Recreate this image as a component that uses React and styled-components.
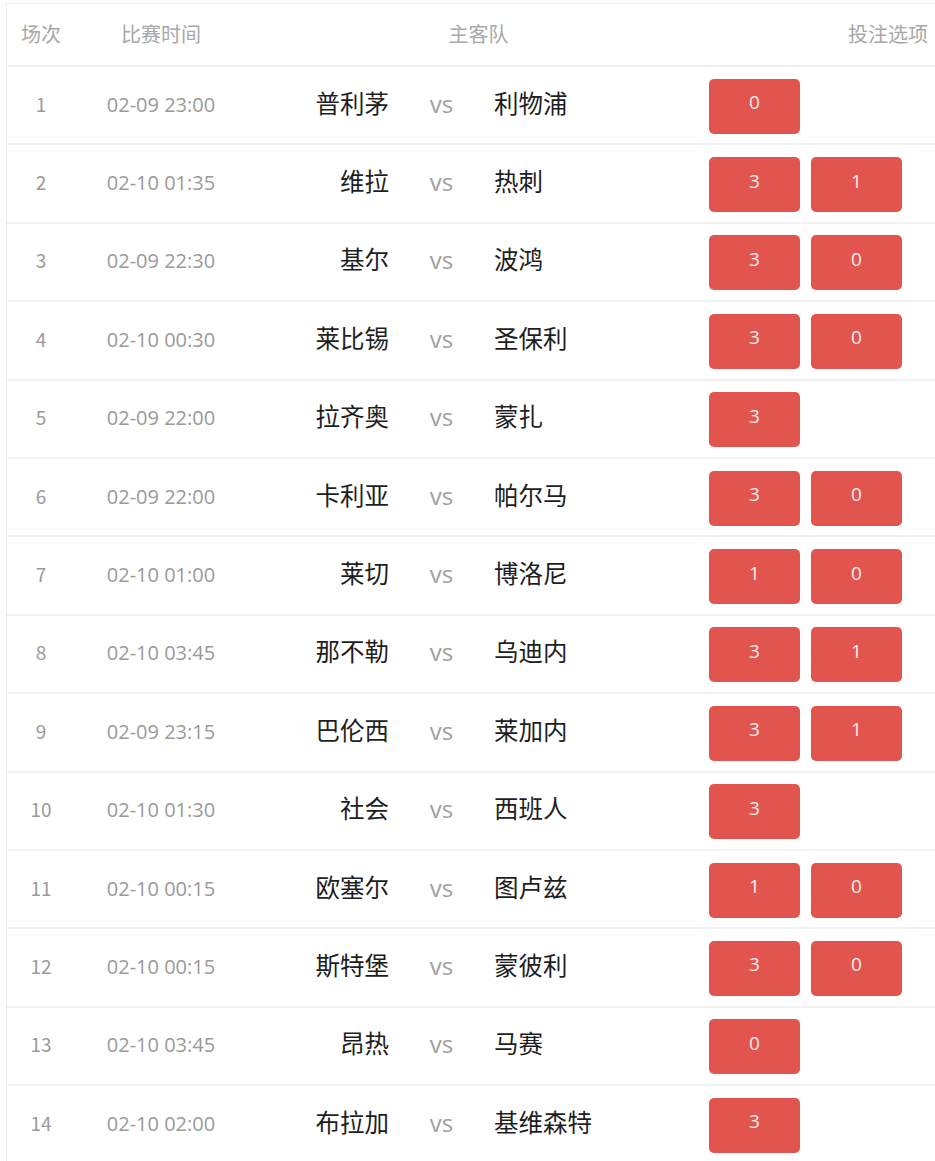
import React from "react";
import styled, { createGlobalStyle } from "styled-components";

const GlobalStyle = createGlobalStyle`
  html, body {
    margin: 0;
    padding: 0;
    background: #fff;
  }
  body {
    font-family: "Noto Sans CJK SC", "Noto Sans", sans-serif;
  }
`;

const matches = [
  { no: 1, time: "02-09 23:00", home: "普利茅", away: "利物浦", picks: ["0"] },
  { no: 2, time: "02-10 01:35", home: "维拉", away: "热刺", picks: ["3", "1"] },
  { no: 3, time: "02-09 22:30", home: "基尔", away: "波鸿", picks: ["3", "0"] },
  { no: 4, time: "02-10 00:30", home: "莱比锡", away: "圣保利", picks: ["3", "0"] },
  { no: 5, time: "02-09 22:00", home: "拉齐奥", away: "蒙扎", picks: ["3"] },
  { no: 6, time: "02-09 22:00", home: "卡利亚", away: "帕尔马", picks: ["3", "0"] },
  { no: 7, time: "02-10 01:00", home: "莱切", away: "博洛尼", picks: ["1", "0"] },
  { no: 8, time: "02-10 03:45", home: "那不勒", away: "乌迪内", picks: ["3", "1"] },
  { no: 9, time: "02-09 23:15", home: "巴伦西", away: "莱加内", picks: ["3", "1"] },
  { no: 10, time: "02-10 01:30", home: "社会", away: "西班人", picks: ["3"] },
  { no: 11, time: "02-10 00:15", home: "欧塞尔", away: "图卢兹", picks: ["1", "0"] },
  { no: 12, time: "02-10 00:15", home: "斯特堡", away: "蒙彼利", picks: ["3", "0"] },
  { no: 13, time: "02-10 03:45", home: "昂热", away: "马赛", picks: ["0"] },
  { no: 14, time: "02-10 02:00", home: "布拉加", away: "基维森特", picks: ["3"] },
];

const Page = styled.div`
  padding: 3px 0 0 6px;
  width: 935px;
  box-sizing: border-box;
  overflow: hidden;
`;

const Table = styled.div`
  border-top: 1px solid #efefef;
  border-left: 1px solid #ececec;
  width: 929px;
`;

const HeaderRow = styled.div`
  display: grid;
  grid-template-columns: 68px 172px 463px 1fr;
  align-items: center;
  height: 63px;
  border-bottom: 2px solid #f0f0f0;
  box-sizing: border-box;
  color: #a8a8a8;
  font-size: 20px;
`;

const HeadCell = styled.div`
  text-align: ${(p) => p.$align || "center"};
  padding-right: ${(p) => (p.$align === "right" ? "8px" : "0")};
  margin-top: -2px;
`;

const Row = styled.div`
  display: grid;
  grid-template-columns: 68px 172px 142px 105px 215px 1fr;
  align-items: center;
  height: 78.4px;
  border-bottom: 2px solid #f1f1f1;
  box-sizing: border-box;
`;

const Num = styled.div`
  text-align: center;
  color: #9a9a9a;
  font-size: 19px;
  margin-top: -4px;
`;

const Time = styled.div`
  text-align: center;
  color: #9a9a9a;
  font-size: 20px;
  margin-top: -2px;
  font-family: "Open Sans", "Noto Sans CJK SC", sans-serif;
`;

const Team = styled.div`
  text-align: ${(p) => p.$align};
  color: #1e1e1e;
  font-size: 24.5px;
  margin-top: -6px;
  white-space: nowrap;
`;

const Vs = styled.div`
  text-align: center;
  color: #a0a0a0;
  font-size: 24px;
  font-family: "Open Sans", sans-serif;
  margin-top: -4px;
`;

const Picks = styled.div`
  display: flex;
  gap: 11px;
  padding-top: 2px;
`;

const Pick = styled.div`
  width: 91px;
  height: 55px;
  border-radius: 5px;
  background: #e2554f;
  color: #fbeeee;
  font-size: 19px;
  font-family: "Open Sans", sans-serif;
  display: flex;
  align-items: center;
  justify-content: center;
  padding-bottom: 8px;
  box-sizing: border-box;
`;

export default function App() {
  return (
    <Page>
      <GlobalStyle />
      <Table>
        <HeaderRow>
          <HeadCell>场次</HeadCell>
          <HeadCell>比赛时间</HeadCell>
          <HeadCell>主客队</HeadCell>
          <HeadCell $align="right">投注选项</HeadCell>
        </HeaderRow>
        {matches.map((m) => (
          <Row key={m.no}>
            <Num>{m.no}</Num>
            <Time>{m.time}</Time>
            <Team $align="right">{m.home}</Team>
            <Vs>vs</Vs>
            <Team $align="left">{m.away}</Team>
            <Picks>
              {m.picks.map((p, i) => (
                <Pick key={i}>{p}</Pick>
              ))}
            </Picks>
          </Row>
        ))}
      </Table>
    </Page>
  );
}
